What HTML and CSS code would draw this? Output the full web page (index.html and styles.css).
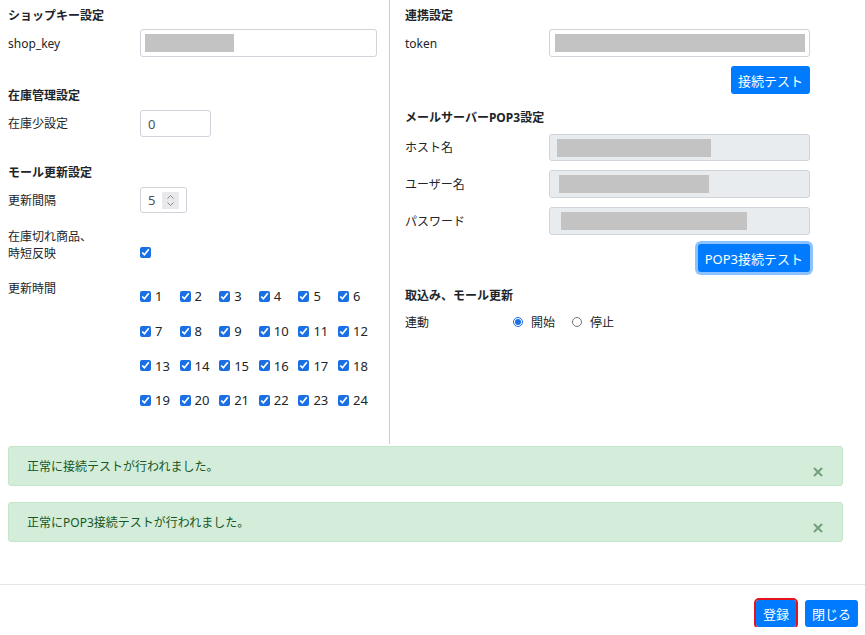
FILE: index.html
```html
<!DOCTYPE html>
<html lang="ja">
<head>
    <meta charset="UTF-8">
    <meta name="viewport" content="width=device-width, initial-scale=1.0">
    <title>設定</title>
    <link rel="stylesheet" href="styles.css">
</head>
<body>
    <div class="settings">
        <div class="col col-left">
            <h2 class="sec">ショップキー設定</h2>
            <div class="row mt5">
                <label class="lbl">shop_key</label>
                <div class="box box-key h28"><span class="redact" style="width:89px"></span></div>
            </div>

            <h2 class="sec mt30">在庫管理設定</h2>
            <div class="row mt6">
                <label class="lbl">在庫少設定</label>
                <div class="box box-stock h27"><span class="val">0</span></div>
            </div>

            <h2 class="sec mt27">モール更新設定</h2>
            <div class="row mt6">
                <label class="lbl">更新間隔</label>
                <div class="box box-num">
                    <span class="val">5</span>
                    <span class="spin">
                        <svg width="9" height="13" viewBox="0 0 9 13"><path d="M1.5 4.5 L4.5 1.5 L7.5 4.5 M1.5 8.5 L4.5 11.5 L7.5 8.5" fill="none" stroke="#8a8a8a" stroke-width="1"/></svg>
                    </span>
                </div>
            </div>

            <div class="row row-bottom mt15">
                <label class="lbl two-line">在庫切れ商品、<br>時短反映</label>
                <input type="checkbox" class="chk chk-single" checked>
            </div>

            <div class="row row-top mt18">
                <label class="lbl">更新時間</label>
                <div class="hours" id="hours"></div>
            </div>
        </div>

        <div class="col col-right">
            <h2 class="sec">連携設定</h2>
            <div class="row mt5">
                <label class="lbl lbl-wide">token</label>
                <div class="box box-wide h28"><span class="redact redact-token" style="width:253px"></span></div>
            </div>
            <div class="btn-row mt9">
                <button class="btn">接続テスト</button>
            </div>

            <h2 class="sec mt15">メールサーバーPOP3設定</h2>
            <div class="row mt8">
                <label class="lbl lbl-wide">ホスト名</label>
                <div class="box box-wide disabled h27"><span class="redact" style="width:154px;margin-left:3px"></span></div>
            </div>
            <div class="row mt9">
                <label class="lbl lbl-wide">ユーザー名</label>
                <div class="box box-wide disabled h28"><span class="redact" style="width:150px;margin-left:5px"></span></div>
            </div>
            <div class="row mt9">
                <label class="lbl lbl-wide">パスワード</label>
                <div class="box box-wide disabled h28"><span class="redact" style="width:186px;margin-left:7px"></span></div>
            </div>
            <div class="btn-row mt9">
                <button class="btn btn-focus">POP3接続テスト</button>
            </div>

            <h2 class="sec mt15">取込み、モール更新</h2>
            <div class="row mt9">
                <label class="lbl lbl-radio">連動</label>
                <label class="radio"><input type="radio" name="link" checked> 開始</label>
                <label class="radio"><input type="radio" name="link"> 停止</label>
            </div>
        </div>
    </div>

    <div class="alerts">
        <div class="alert">
            正常に接続テストが行われました。
            <span class="close"><svg width="10" height="10" viewBox="0 0 10 10"><path d="M1 1 L9 9 M9 1 L1 9" stroke="currentColor" stroke-width="2"/></svg></span>
        </div>
        <div class="alert">
            正常にPOP3接続テストが行われました。
            <span class="close"><svg width="10" height="10" viewBox="0 0 10 10"><path d="M1 1 L9 9 M9 1 L1 9" stroke="currentColor" stroke-width="2"/></svg></span>
        </div>
    </div>

    <div class="footer">
        <button class="btn btn-save">登録</button>
        <button class="btn">閉じる</button>
    </div>

    <script>
        // build the 24 hour checkboxes
        var hours = document.getElementById('hours');
        for (var i = 1; i <= 24; i++) {
            var cell = document.createElement('label');
            cell.className = 'hour';
            cell.innerHTML = '<input type="checkbox" class="chk" checked><span>' + i + '</span>';
            hours.appendChild(cell);
        }
    </script>
</body>
</html>
```

FILE: styles.css
```css
body { margin: 0; font-family: "Noto Sans", "Noto Sans CJK JP", sans-serif; font-size: 12px; color: #212529; background: #fff; }

.settings { display: flex; padding: 0 8px; }
.col { box-sizing: border-box; }
.col-left { width: 382px; height: 444px; padding-top: 7px; border-right: 1px solid #cccccc; }
.col-right { flex: 1; padding: 7px 47px 0 15px; }

.sec { margin: 0; padding-top: 1px; font-size: 12px; font-weight: bold; line-height: 16px; color: #212529; }

.mt5 { margin-top: 5px; }
.mt6 { margin-top: 6px; }
.mt8 { margin-top: 8px; }
.mt9 { margin-top: 9px; }
.mt15 { margin-top: 15px; }
.mt18 { margin-top: 18px; }
.mt27 { margin-top: 27px; }
.mt30 { margin-top: 30px; }

.row { display: flex; align-items: center; }
.row-bottom { align-items: flex-end; }
.row-top { align-items: flex-start; }

.lbl { width: 132px; flex: none; line-height: 17px; }
.lbl-wide { width: 144px; }
.lbl-radio { width: 108px; }

.box { box-sizing: border-box; display: flex; align-items: center; border: 1px solid #ced4da; border-radius: 3px; background: #fff; padding: 0 4px; }
.box.disabled { background: #e9ecef; }
.h27 { height: 27px; }
.h28 { height: 28px; }
.box-key { width: 237px; }
.box-stock { width: 71px; padding-left: 7px; }
.box-num { width: 47px; height: 26px; padding-left: 7px; justify-content: space-between; padding-right: 7px; }
.box-wide { width: 261px; }

.redact { display: block; height: 18px; background: #c3c3c3; }
.redact-token { margin-left: 1px; }

.val { font-size: 13px; color: #495057; }
.spin { display: flex; align-items: center; justify-content: center; width: 17px; height: 17px; background: #e9e9ed; }

.chk { width: 11px; height: 11px; margin: 0; accent-color: #1a6fe5; }
.chk-single { margin-bottom: 4px; }

.hours { display: grid; grid-template-columns: repeat(6, 39.6px); grid-auto-rows: 34.7px; margin-top: -1px; }
.hour { display: flex; align-items: center; gap: 4px; font-size: 13px; }

.btn-row { display: flex; justify-content: flex-end; }
.btn { height: 28px; padding: 0 7px; border: none; border-radius: 3px; background: #007bff; color: #fff; font-family: "Noto Sans", "Noto Sans CJK JP", sans-serif; font-size: 13px; cursor: pointer; }
.btn-focus { box-shadow: 0 0 0 3px rgba(0, 123, 255, .45); }

.radio { display: flex; align-items: center; gap: 6px; margin-right: 17px; font-size: 12px; }
.radio input { width: 10px; height: 10px; margin: 0 2px 0 0; accent-color: #1a6fe5; }

.alerts { padding: 0 22px 0 8px; margin-top: 2px; }
.alert { position: relative; box-sizing: border-box; height: 40px; display: flex; align-items: center; padding: 0 18px; background: #d4edda; border: 1px solid #c3e6cb; border-radius: 3px; color: #155724; font-size: 12px; }
.alert + .alert { margin-top: 16px; }
.close { position: absolute; right: 19px; top: 20px; width: 10px; height: 10px; color: #6f9f7b; display: flex; }

.footer { margin-top: 42px; border-top: 1px solid #e5e5e5; display: flex; justify-content: flex-end; gap: 9px; padding: 15px 7px 0 0; }
.footer .btn { height: 27px; }
.btn-save { outline: 2px solid #e3141e; }
```
